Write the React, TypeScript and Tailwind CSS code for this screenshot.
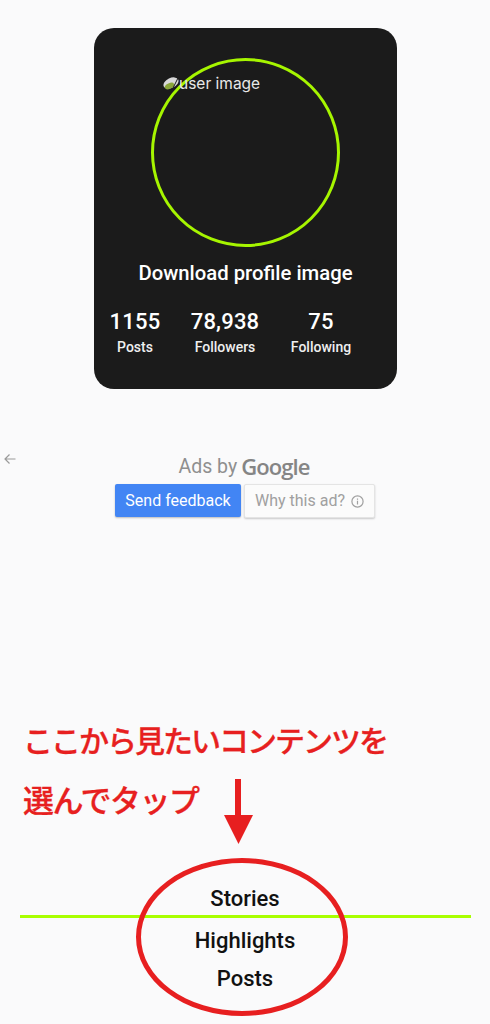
const roboto = { fontFamily: 'Roboto, sans-serif' }

const stats = [
  { value: '1155', label: 'Posts', w: 'w-[50px] ml-[16px]' },
  { value: '78,938', label: 'Followers', w: 'w-[70px] ml-[30px]' },
  { value: '75', label: 'Following', w: 'w-[62px] ml-[30px]' }
]

function ProfileCard() {
  return (
    <div className="ml-[94px] flex h-[361px] w-[303px] flex-col items-center rounded-[20px] bg-[#1b1b1b] pt-[30px] text-white">
      {/* Avatar ring with the broken image */}
      <div className="relative h-[189px] w-[189px] shrink-0 rounded-full border-[3px] border-[#a6f500]">
        <div className="absolute left-[8px] top-[15px] flex items-center">
          <svg width="18" height="16" viewBox="0 0 18 16">
            <ellipse cx="9" cy="7" rx="8" ry="5" transform="rotate(-25 9 7)" fill="#d8d8d8" />
            <ellipse cx="7.500" cy="10" rx="5" ry="2.800" transform="rotate(-25 7.500 10)" fill="#8aa63a" />
            <path d="M16 2 L10 14" stroke="#1b1b1b" strokeWidth="1" />
          </svg>
          <span className="-ml-[1px] whitespace-nowrap font-['Inter'] text-[15.5px] leading-none text-[#e8e8e8]">user image</span>
        </div>
      </div>
      <div className="mt-[14px] whitespace-nowrap text-[20.3px] font-medium leading-[24px]">Download profile image</div>
      <div className="mt-[25px] flex w-full">
        {stats.map((s) => (
          <div key={s.label} className={`flex flex-col items-center ${s.w}`}>
            <div className="whitespace-nowrap text-[22px] font-medium leading-[24px] tracking-[0.2px]">{s.value}</div>
            <div className="mt-[4px] whitespace-nowrap text-[14px] font-medium leading-[18px] text-[#efefef]">{s.label}</div>
          </div>
        ))}
      </div>
    </div>
  )
}

function AdNotice() {
  return (
    <div className="relative mt-[64px] flex flex-col items-center">
      <svg className="absolute left-[4px] top-[0px]" width="12" height="12" viewBox="0 0 12 12" fill="none" stroke="#9a9a9a" strokeWidth="1.2">
        <path d="M11.500 6H1M5.500 1.500 1 6l4.500 4.500" />
      </svg>
      <div className="flex h-[26px] -translate-x-[1px] items-center text-[19.5px] leading-none text-[#8f8f8f]">
        <span className="translate-y-[1px]">Ads by</span>
        <span className="ml-[4px] font-['Open_Sans'] text-[22px] font-semibold leading-none tracking-[-0.9px] text-[#858585]">Google</span>
      </div>
      <div className="mt-[5px] flex gap-[3px] text-[16px]">
        <div className="flex h-[33px] w-[126px] items-center justify-center rounded-[2px] bg-[#4285f4] text-white shadow-[0_1px_2px_rgba(0,0,0,0.25)]">Send feedback</div>
        <div className="flex h-[34px] w-[131px] items-center justify-center gap-[6px] rounded-[2px] border border-[#e4e4e4] bg-[#fbfbfb] text-[#a0a0a0] shadow-[0_1px_2px_rgba(0,0,0,0.2)]">
          <span>Why this ad?</span>
          <svg width="13" height="13" viewBox="0 0 13 13" fill="none" stroke="#a0a0a0" strokeWidth="1.2">
            <circle cx="6.500" cy="6.500" r="5.600" />
            <path d="M6.500 5.800v3.600M6.500 3.400v1.300" />
          </svg>
        </div>
      </div>
    </div>
  )
}

function Annotation() {
  return (
    <div className="relative mt-[194px] pl-[23px] text-[30px] font-medium leading-[60px] text-[#e71f20] [-webkit-text-stroke:0.3px_#e71f20]" style={{ fontFamily: 'Roboto, "Noto Sans CJK JP", sans-serif' }}>
      <div className="h-[60px] whitespace-nowrap tracking-[-2px]">ここから見たいコンテンツを</div>
      <div className="h-[60px] whitespace-nowrap text-[31px] tracking-[-1.500px]">選んでタップ</div>
      <svg className="absolute left-[222px] top-[67px]" width="34" height="68" viewBox="0 0 34 68" fill="#e71f20">
        <rect x="13" y="0" width="6" height="38" />
        <path d="M2 36h29L16.500 65z" />
      </svg>
    </div>
  )
}

function Tabs() {
  return (
    <div className="relative mt-[33px] flex flex-col items-center text-[22px] font-medium leading-[26px] text-[#111]">
      <div className="mt-[21px]">Stories</div>
      <div className="mt-[3px] h-[3px] w-[451px] bg-[#a8ff00]" />
      <div className="mt-[10px]">Highlights</div>
      <div className="mt-[12px]">Posts</div>
      {/* Red ring drawn over the tabs */}
      <div className="absolute left-[136px] top-[-7px] h-[158px] w-[212px] rounded-[50%] border-[5px] border-[#e71f20]" />
    </div>
  )
}

export default function App() {
  return (
    <div className="min-h-[1024px] overflow-hidden bg-[#fafafb] pt-[28px]" style={roboto}>
      <ProfileCard />
      <AdNotice />
      <Annotation />
      <Tabs />
    </div>
  )
}
